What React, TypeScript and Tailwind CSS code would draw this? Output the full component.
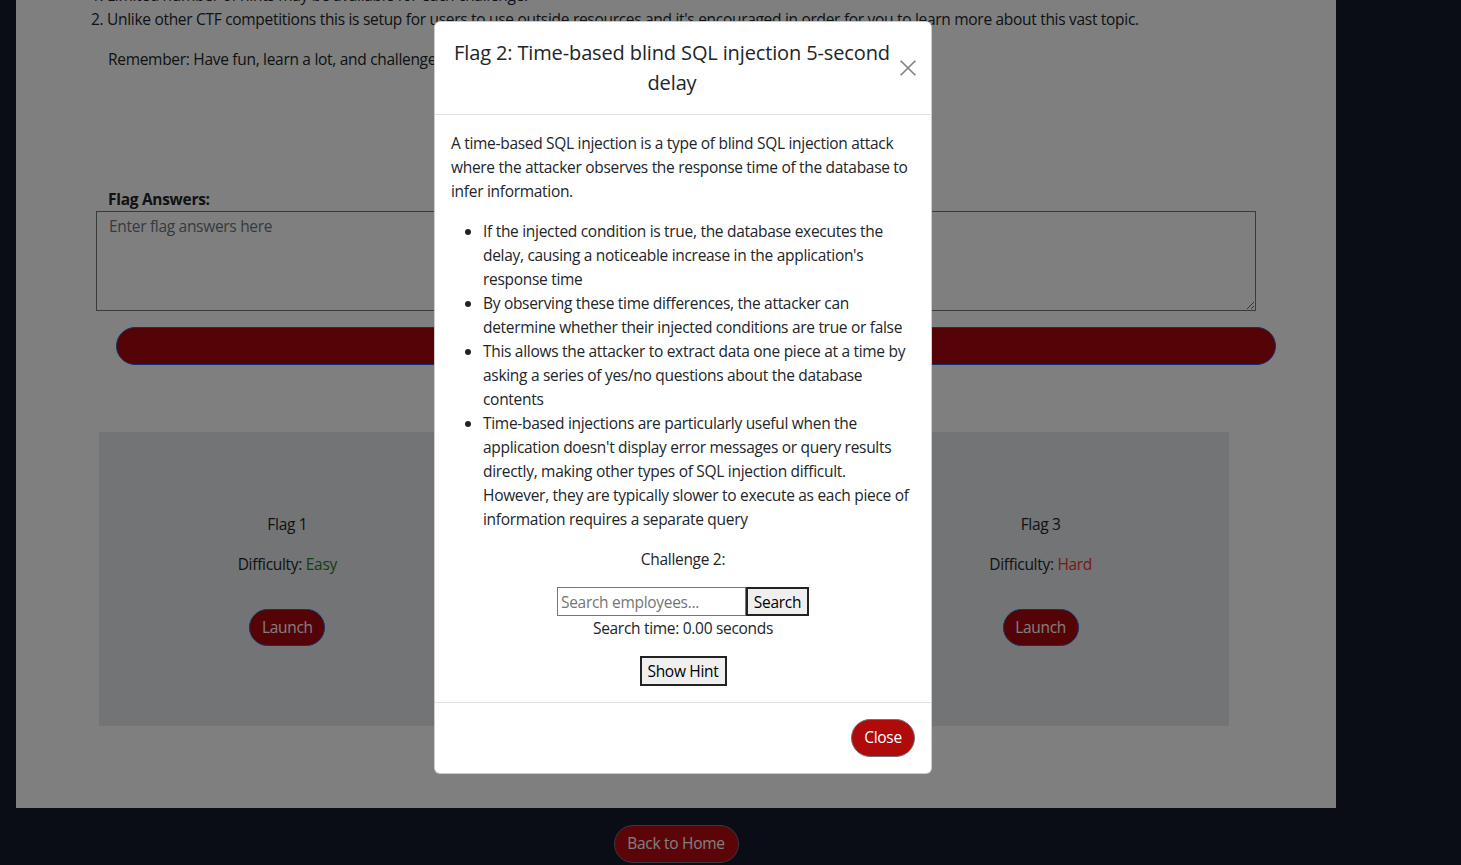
const bullets = [
  "If the injected condition is true, the database executes the delay, causing a noticeable increase in the application's response time",
  "By observing these time differences, the attacker can determine whether their injected conditions are true or false",
  "This allows the attacker to extract data one piece at a time by asking a series of yes/no questions about the database contents",
  "Time-based injections are particularly useful when the application doesn't display error messages or query results directly, making other types of SQL injection difficult. However, they are typically slower to execute as each piece of information requires a separate query",
];

// flag 2 sits under the open modal
const flags = [
  { name: "Flag 1", level: "Easy", color: "text-[#2f7a24]", covered: false },
  { name: "Flag 2", level: "Medium", color: "text-[#d98a00]", covered: true },
  { name: "Flag 3", level: "Hard", color: "text-[#f23030]", covered: false },
];

function FlagCard({ name, level, color, covered }: { name: string; level: string; color: string; covered: boolean }) {
  return (
    <div className={`flex flex-col items-center text-center ${covered ? "invisible" : ""}`}>
      <p className="leading-6">{name}</p>
      <p className="mt-4 leading-6">
        Difficulty: <span className={color}>{level}</span>
      </p>
      <button
        type="button"
        className="mt-[33px] h-[37px] w-[76px] rounded-full border border-[#2f5fd0] bg-[#a8060f] text-white"
      >
        Launch
      </button>
    </div>
  );
}

function Modal() {
  return (
    <div className="absolute left-[434px] top-[21px] z-20 w-[498px] rounded-md border border-black/20 bg-white text-[#212529]">
      <div className="flex items-center border-b border-[#dee2e6] p-4">
        <h5 className="flex-1 text-center text-[20px] font-medium leading-[30px] tracking-[-0.13px]">
          Flag 2: Time-based blind SQL injection 5-second delay
        </h5>
        <button type="button" aria-label="Close" className="ml-[3px] mr-[-5px] flex h-6 w-6 items-center justify-center opacity-50">
          <svg width="18" height="18" viewBox="0 0 16 16" fill="none" stroke="#000" strokeWidth="1.4">
            <path d="M1.5 1.5l13 13M14.5 1.5l-13 13" />
          </svg>
        </button>
      </div>

      <div className="p-4 leading-6">
        <p>
          A time-based SQL injection is a type of blind SQL injection attack where the attacker observes the response
          time of the database to infer information.
        </p>
        <ul className="mt-4 list-disc pl-8">
          {bullets.map((b) => (
            <li key={b}>{b}</li>
          ))}
        </ul>
        <p className="mt-4 text-center">Challenge 2:</p>
        <div className="mt-4 flex justify-center">
          <input
            placeholder="Search employees..."
            className="h-[29px] w-[189px] border border-[#767676] px-[3px] text-[15.5px] tracking-[-0.3px] text-black placeholder:text-[#757575]"
          />
          <button type="button" className="h-[29px] w-[63px] border-2 border-[#222] bg-[#efefef] text-black">
            Search
          </button>
        </div>
        <p className="text-center">Search time: 0.00 seconds</p>
        <div className="mt-4 flex justify-center">
          <button type="button" className="h-[30px] w-[87px] border-2 border-[#222] bg-[#efefef] text-black">
            Show Hint
          </button>
        </div>
      </div>

      <div className="flex justify-end border-t border-[#dee2e6] px-4 py-4">
        <button
          type="button"
          className="h-[38px] w-[64px] rounded-full border border-[#6c757d] bg-[#b00a0a] text-white"
        >
          Close
        </button>
      </div>
    </div>
  );
}

export default function App() {
  return (
    <div
      className="relative h-[865px] overflow-hidden bg-[#141a2c] text-[15.5px] tracking-[-0.3px] text-[#212529]"
      style={{ fontFamily: '"Open Sans", "Noto Sans", sans-serif' }}
    >
      <div className="ml-4 mt-[-17px] h-[825px] w-[1320px] bg-white">
        <ol className="ml-[59px] list-decimal pl-8 leading-6">
          <li>Limited number of hints may be available for each challenge.</li>
          <li>
            Unlike other CTF competitions this is setup for users to use outside resources and it's encouraged in order
            for you to learn more about this vast topic.
          </li>
        </ol>
        <p className="ml-[92px] mt-4 leading-6">Remember: Have fun, learn a lot, and challenge yourself!</p>

        <label className="ml-[92px] mt-[116px] block font-bold leading-6">Flag Answers:</label>
        <textarea
          placeholder="Enter flag answers here"
          className="ml-[80px] block h-[100px] w-[1160px] border border-[#767676] px-3 py-[3px] placeholder:text-[#6c757d]"
        />
        <button
          type="button"
          aria-label="Submit"
          className="ml-[100px] mt-4 block h-[38px] w-[1160px] rounded-full border border-[#2f5fd0] bg-[#a8060f] text-white"
        />

        <div className="ml-[83px] mt-[67px] grid h-[294px] w-[1130px] grid-cols-3 items-center bg-[#e6e8ea]">
          {flags.map((f) => (
            <FlagCard key={f.name} {...f} />
          ))}
        </div>
      </div>

      <div className="ml-4 flex w-[1320px] justify-center pt-[17px]">
        <button
          type="button"
          className="h-[38px] w-[125px] rounded-full border border-[#6c757d] bg-[#b80a10] text-white"
        >
          Back to Home
        </button>
      </div>

      <div className="absolute inset-0 z-10 bg-black/50" />
      <Modal />
    </div>
  );
}
